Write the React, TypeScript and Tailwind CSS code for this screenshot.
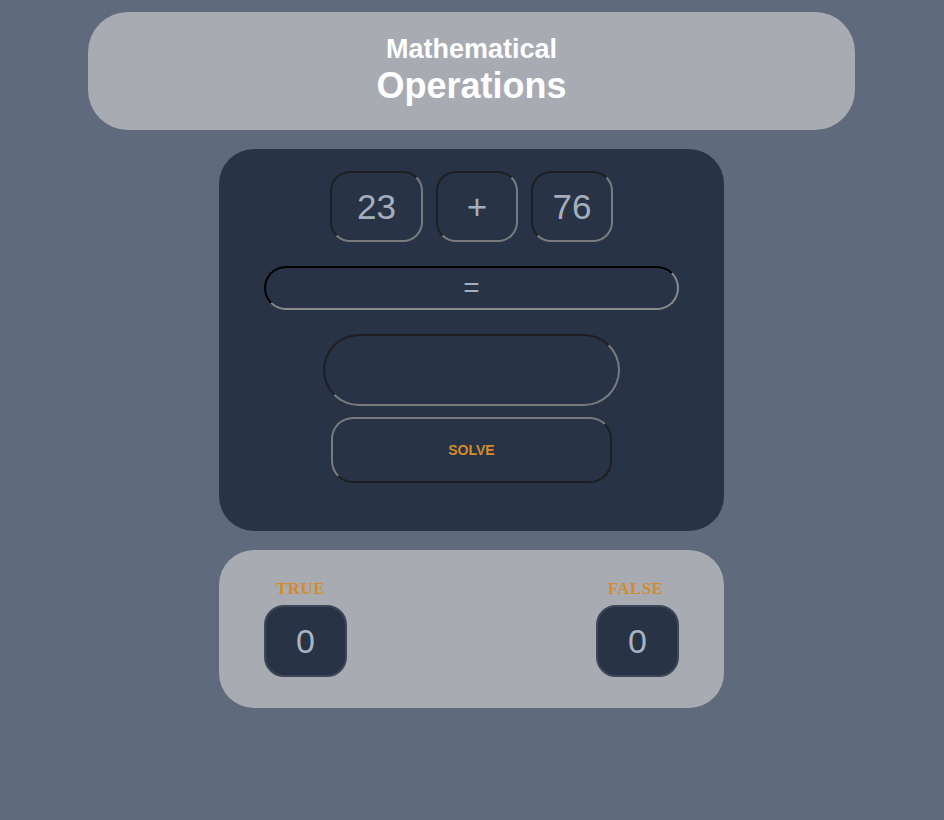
import React from "react";

const sans = { fontFamily: '"Liberation Sans", Arial, sans-serif' };
const serif = { fontFamily: '"Liberation Serif", "Times New Roman", serif' };

function NumBox({ value, wide }: { value: string; wide?: boolean }) {
  return (
    <div
      className={`${wide ? "w-[93px]" : "w-[82px]"} h-[71px] flex items-center justify-center pt-[2px] rounded-[20px] border-2 border-t-[#1e1f22] border-l-[#1e1f22] border-r-[#7a7b7e] border-b-[#7a7b7e] text-[35px] text-[#a7aebb]`}
    >
      {value}
    </div>
  );
}

function Score({ label, value, shift }: { label: string; value: number; shift: string }) {
  return (
    <div className="flex flex-col items-center w-[83px]">
      <span style={serif} className={`${shift} text-[17px] font-bold text-[#d38b2d] leading-none tracking-wide`}>
        {label}
      </span>
      <div className="mt-[8px] w-[83px] h-[72px] flex items-center justify-center rounded-[20px] bg-[#283345] border-2 border-[#3d4759] text-[34px] text-[#aab3c2]">
        {value}
      </div>
    </div>
  );
}

export default function App() {
  return (
    <div style={sans} className="min-h-[820px] bg-[#5f6a7d] pt-3 pr-[1px] flex flex-col items-center">
      {/* Header */}
      <div className="w-[767px] h-[118px] rounded-[40px] bg-[#a9abb2] flex flex-col items-center justify-center text-white font-bold">
        <h2 className="text-[27px] leading-[30px] -mt-[2px]">Mathematical</h2>
        <h1 className="text-[36px] leading-[40px] mt-[2px]">Operations</h1>
      </div>

      {/* Calculator */}
      <div className="mt-[19px] w-[505px] h-[382px] rounded-[35px] bg-[#283345] flex flex-col items-center pt-[22px]">
        <div className="flex gap-[13px]">
          <NumBox value="23" wide />
          <NumBox value="+" />
          <NumBox value="76" />
        </div>
        <div className="mt-[24px] w-[415px] h-[44px] rounded-full border-2 border-t-[#000] border-l-[#000] border-r-[#8a8b8d] border-b-[#8a8b8d] flex items-center justify-center text-[28px] text-[#a7aebb] leading-none">
          =
        </div>
        <input
          className="mt-[24px] w-[297px] h-[72px] rounded-full bg-transparent outline-none border-2 border-t-[#1e1f22] border-l-[#1e1f22] border-r-[#7a7b7e] border-b-[#7a7b7e] text-center text-[#a7aebb] text-2xl"
        />
        <button className="mt-[11px] w-[281px] h-[66px] rounded-[22px] border-2 border-t-[#7a7b7e] border-l-[#7a7b7e] border-r-[#1e1f22] border-b-[#1e1f22] text-[14px] font-bold text-[#d38b2d]">
          SOLVE
        </button>
      </div>

      {/* Score */}
      <div className="mt-[19px] w-[505px] h-[158px] rounded-[35px] bg-[#a9abb2] flex justify-between px-[45px] pt-[30px]">
        <Score label="TRUE" value={0} shift="-ml-[10px]" />
        <Score label="FALSE" value={0} shift="-ml-[4px]" />
      </div>
    </div>
  );
}
